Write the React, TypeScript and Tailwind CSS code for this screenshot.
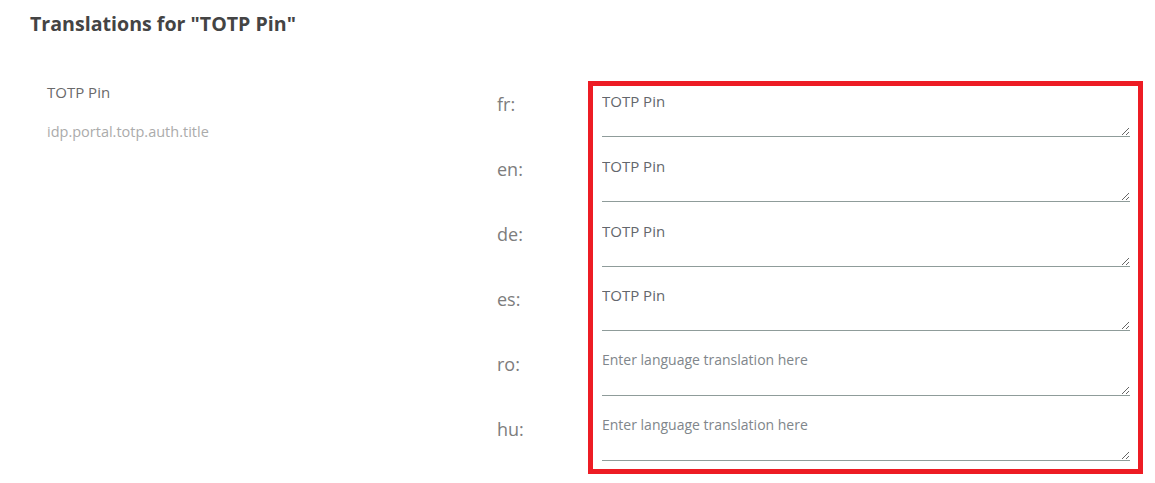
import React from "react";

const rows: { lang: string; value: string }[] = [
  { lang: "fr", value: "TOTP Pin" },
  { lang: "en", value: "TOTP Pin" },
  { lang: "de", value: "TOTP Pin" },
  { lang: "es", value: "TOTP Pin" },
  { lang: "ro", value: "" },
  { lang: "hu", value: "" },
];

export default function App() {
  return (
    <div
      className="w-[1155px] h-[483px] bg-white overflow-hidden"
      style={{ fontFamily: '"Open Sans", "Liberation Sans", sans-serif' }}
    >
      <h1 className="pl-[30px] pt-[10px] text-[19.6px] leading-[28px] font-bold text-[#444444]">
        Translations for "TOTP Pin"
      </h1>
      <div className="flex items-start mt-[43px]">
        <div className="w-[588px] flex">
          <div className="w-[497px] pl-[47px] pt-[1px]">
            <div className="text-[15px] leading-[20px] text-[#6a6a6a]">TOTP Pin</div>
            <div className="mt-[20px] text-[14.5px] leading-[20px] text-[#ababab]">
              idp.portal.totp.auth.title
            </div>
          </div>
          <div className="flex-1 pt-[10px] flex flex-col">
            {rows.map((r) => (
              <div key={r.lang} className="h-[65px] text-[18px] leading-[26px] text-[#7d7d7d]">
                {r.lang}:
              </div>
            ))}
          </div>
        </div>
        <div className="w-[555px] border-[5px] border-[#ed1c24] pt-[1px] pl-[9px] pr-[8px] pb-[8px] flex flex-col gap-[14.8px]">
          {rows.map((r) => (
            <textarea
              key={r.lang}
              defaultValue={r.value}
              placeholder="Enter language translation here"
              className="block w-full h-[50px] pt-[3px] px-0 text-[15px] leading-[22px] text-[#63676c] placeholder:text-[14px] placeholder:text-[#80868b] border-0 border-b border-[#8f9c9a] outline-none bg-transparent"
              style={{ fontFamily: '"Open Sans", "Liberation Sans", sans-serif' }}
            />
          ))}
        </div>
      </div>
    </div>
  );
}
